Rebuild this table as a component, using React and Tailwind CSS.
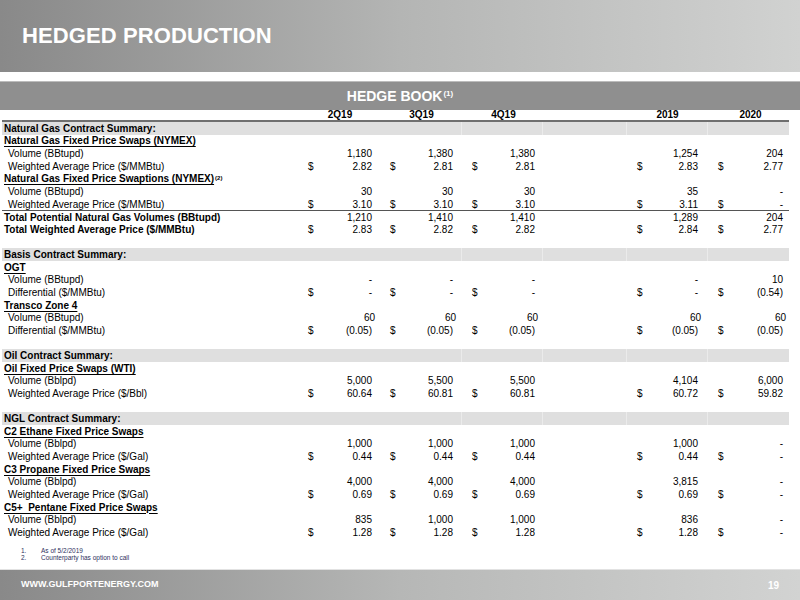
import React from 'react';

const rows = [
  { t: 'section', label: 'Natural Gas Contract Summary:' },
  { t: 'sub', label: 'Natural Gas Fixed Price Swaps (NYMEX)' },
  { t: 'item', label: 'Volume (BBtupd)', v: ['1,180', '1,380', '1,380', '1,254', '204'] },
  { t: 'item', label: 'Weighted Average Price ($/MMBtu)', d: true, v: ['2.82', '2.81', '2.81', '2.83', '2.77'] },
  { t: 'sub', label: 'Natural Gas Fixed Price Swaptions (NYMEX)', sup: '(2)' },
  { t: 'item', label: 'Volume (BBtupd)', v: ['30', '30', '30', '35', '-'] },
  { t: 'item', label: 'Weighted Average Price ($/MMBtu)', d: true, v: ['3.10', '3.10', '3.10', '3.11', '-'] },
  { t: 'total', label: 'Total Potential Natural Gas Volumes (BBtupd)', line: true, v: ['1,210', '1,410', '1,410', '1,289', '204'] },
  { t: 'total', label: 'Total Weighted Average Price ($/MMBtu)', d: true, v: ['2.83', '2.82', '2.82', '2.84', '2.77'] },
  { t: 'blank' },
  { t: 'section', label: 'Basis Contract Summary:' },
  { t: 'sub', label: 'OGT' },
  { t: 'item', label: 'Volume (BBtupd)', v: ['-', '-', '-', '-', '10'] },
  { t: 'item', label: 'Differential ($/MMBtu)', d: true, v: ['-', '-', '-', '-', '(0.54)'] },
  { t: 'sub', label: 'Transco Zone 4' },
  { t: 'item', label: 'Volume (BBtupd)', shift: true, v: ['60', '60', '60', '60', '60'] },
  { t: 'item', label: 'Differential ($/MMBtu)', d: true, v: ['(0.05)', '(0.05)', '(0.05)', '(0.05)', '(0.05)'] },
  { t: 'blank' },
  { t: 'section', label: 'Oil Contract Summary:' },
  { t: 'sub', label: 'Oil Fixed Price Swaps (WTI)' },
  { t: 'item', label: 'Volume (Bblpd)', v: ['5,000', '5,500', '5,500', '4,104', '6,000'] },
  { t: 'item', label: 'Weighted Average Price ($/Bbl)', d: true, v: ['60.64', '60.81', '60.81', '60.72', '59.82'] },
  { t: 'blank' },
  { t: 'section', label: 'NGL Contract Summary:' },
  { t: 'sub', label: 'C2 Ethane Fixed Price Swaps' },
  { t: 'item', label: 'Volume (Bblpd)', v: ['1,000', '1,000', '1,000', '1,000', '-'] },
  { t: 'item', label: 'Weighted Average Price ($/Gal)', d: true, v: ['0.44', '0.44', '0.44', '0.44', '-'] },
  { t: 'sub', label: 'C3 Propane Fixed Price Swaps' },
  { t: 'item', label: 'Volume (Bblpd)', v: ['4,000', '4,000', '4,000', '3,815', '-'] },
  { t: 'item', label: 'Weighted Average Price ($/Gal)', d: true, v: ['0.69', '0.69', '0.69', '0.69', '-'] },
  { t: 'sub', label: 'C5+  Pentane Fixed Price Swaps' },
  { t: 'item', label: 'Volume (Bblpd)', v: ['835', '1,000', '1,000', '836', '-'] },
  { t: 'item', label: 'Weighted Average Price ($/Gal)', d: true, v: ['1.28', '1.28', '1.28', '1.28', '-'] },
];

// each period cell runs from the gap before its "$" to the right edge of its value
const cols = [
  'w-[64px] pl-0',
  'w-[81px] pl-[18px]',
  'w-[82px] pl-[19px]',
  'w-[163px] pl-[102px]',
  'w-[85px] pl-[20px]',
];

const periods = ['2Q19', '3Q19', '4Q19', '2019', '2020'];

const Values = ({ row }) => (
  <>
    {row.v.map((val, i) => (
      <div key={i} className={`${cols[i]} flex items-center`}>
        <span className="w-[20px]">{row.d ? '$' : ''}</span>
        <span className={`flex-1 text-right ${row.shift ? '-mr-[3px]' : ''}`}>{val}</span>
      </div>
    ))}
  </>
);

const Row = ({ row }) => {
  if (row.t === 'blank') return <div className="h-[12.625px]" />;

  if (row.t === 'section') {
    return (
      <div className="h-[12.625px] flex bg-[#dfdfdf]">
        <div className="w-[459px] pl-[2px] flex items-center font-bold whitespace-nowrap">{row.label}</div>
        <div className="w-[81px] border-l border-[#ebebeb]" />
        <div className="w-[84px] border-l border-[#ebebeb]" />
        <div className="w-[81px] border-l border-[#ebebeb]" />
        <div className="w-[82px] border-l border-[#ebebeb]" />
      </div>
    );
  }

  if (row.t === 'sub') {
    return (
      <div className="h-[12.625px] flex items-center pl-[2px] font-bold whitespace-pre">
        <span className="underline underline-offset-[1.5px] decoration-1">{row.label}</span>
        {row.sup && <span className="text-[6px] self-start mt-[1px] ml-[1px]">{row.sup}</span>}
      </div>
    );
  }

  return (
    <div className={`h-[12.625px] flex ${row.line ? 'border-t-[1.5px] border-[#555]' : ''}`}>
      <div className={`w-[306px] flex items-center whitespace-nowrap ${row.t === 'total' ? 'pl-[2px] font-bold' : 'pl-[6px]'}`}>
        {row.label}
      </div>
      <Values row={row} />
    </div>
  );
};

export default function App() {
  return (
    <div className="w-[800px] h-[600px] flex flex-col bg-white text-black font-['Liberation_Sans',Arial,sans-serif] overflow-hidden">
      {/* title bar */}
      <div className="h-[72px] flex items-center pl-[22px] pb-[2px] bg-linear-to-r from-[#898989] via-[#b4b5b4] to-[#d1d2d1]">
        <h1 className="text-white font-bold text-[22px] tracking-[0.1px]">HEDGED PRODUCTION</h1>
      </div>

      <div className="h-[9px]" />

      {/* hedge book band */}
      <div className="h-[29px] border-t border-[#bcbcbc] bg-[#8f8f8f] flex items-center justify-center">
        <span className="text-white font-bold text-[14px] leading-none">
          HEDGE BOOK
          <span className="text-[8px] relative -top-[5px] ml-[1px]">(1)</span>
        </span>
      </div>

      <div className="ml-[2px] w-[787px] text-[10px]">
        {/* period headings */}
        <div className="h-[10px] flex font-bold">
          <div className="w-[306px]" />
          {periods.map((p, i) => (
            <div key={p} className={`${cols[i]} flex items-center`}>
              <span className="flex-1 text-center leading-none">{p}</span>
            </div>
          ))}
        </div>
        <div className="h-[2px] bg-[#6f6f6f]" />

        {rows.map((r, i) => (
          <Row key={i} row={r} />
        ))}
      </div>

      {/* footnotes */}
      <div className="mt-[8px] pl-[21px] text-[6.5px] leading-[7px] text-[#2e3160]">
        <div className="flex">
          <span className="w-[20px]">1.</span>
          <span>As of 5/2/2019</span>
        </div>
        <div className="flex">
          <span className="w-[20px]">2.</span>
          <span>Counterparty has option to call</span>
        </div>
      </div>

      <div className="flex-1" />

      {/* footer */}
      <div className="h-[31px] border-t border-[#e2e2e2] bg-linear-to-r from-[#898989] via-[#b6b7b6] to-[#d2d3d2] flex items-center justify-between pl-[21px] pr-[21px]">
        <span className="text-white font-bold text-[9px]">WWW.GULFPORTENERGY.COM</span>
        <span className="text-white font-bold text-[10px]">19</span>
      </div>
    </div>
  );
}
